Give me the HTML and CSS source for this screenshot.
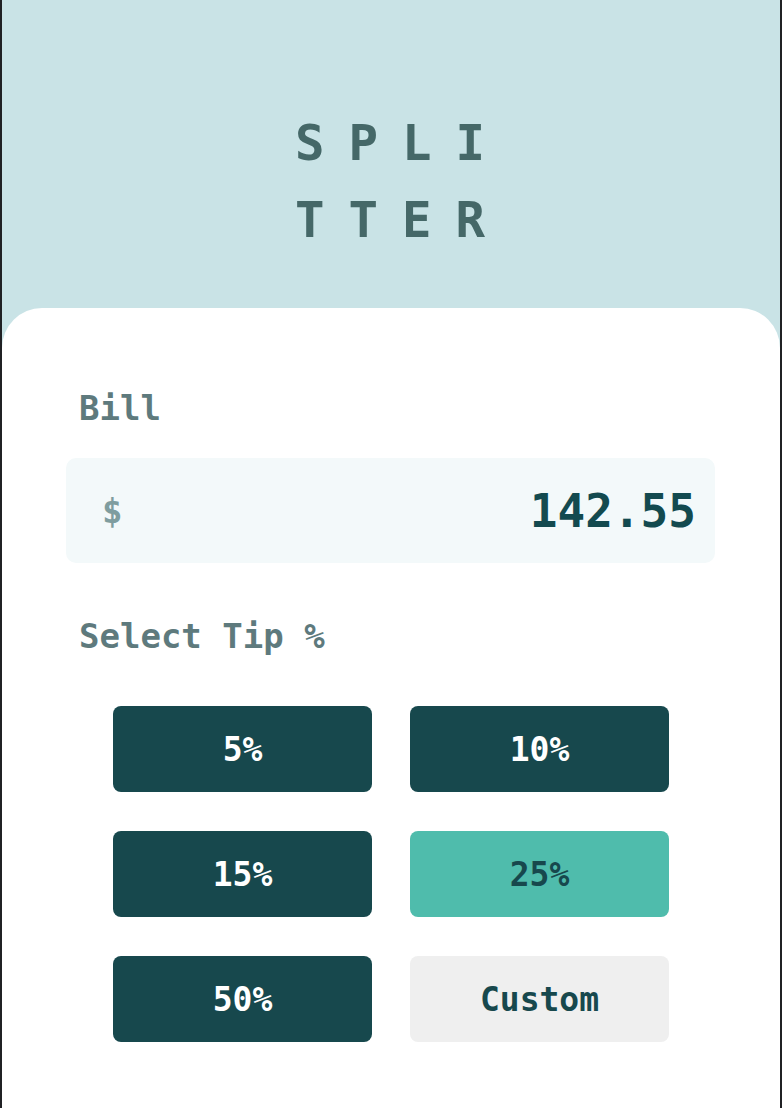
FILE: index.html
```html
<!DOCTYPE html>
<html lang="en">
<head>
<meta charset="utf-8">
<title>Splitter</title>
<link rel="stylesheet" href="styles.css">
</head>
<body>
<div class="frame">
  <header class="header">
    <h1 class="logo">SPLITTER</h1>
  </header>
  <main class="card">
    <label class="label" for="bill">Bill</label>
    <div class="bill">
      <span class="dollar">$</span>
      <span class="bill-value" id="bill">142.55</span>
    </div>
    <div class="label label-tip">Select Tip %</div>
    <div class="tips">
      <button class="tip">5%</button>
      <button class="tip">10%</button>
      <button class="tip">15%</button>
      <button class="tip tip-active">25%</button>
      <button class="tip">50%</button>
      <button class="tip tip-custom">Custom</button>
    </div>
  </main>
</div>
</body>
</html>
```

FILE: styles.css
```css
html, body {
  margin: 0;
  padding: 0;
  height: 100%;
  background: #202124;
}
body {
  font-family: "DejaVu Sans Mono", "Liberation Mono", monospace;
  font-weight: bold;
  overflow: hidden;
}
.frame {
  margin: 0 2px;
  min-height: 100%;
  background: #c9e3e6;
  display: flex;
  flex-direction: column;
}
.header {
  padding-top: 105px;
  padding-bottom: 49px;
  display: flex;
  justify-content: center;
}
.logo {
  margin: 0;
  width: 216px;
  padding-left: 24px;
  font-size: 49px;
  line-height: 77px;
  letter-spacing: 24px;
  color: #456868;
  word-break: break-all;
  font-weight: bold;
}
.card {
  flex: 1;
  background: #ffffff;
  border-radius: 40px 40px 0 0;
  padding: 80px 65px 60px 64px;
}
.label {
  display: block;
  font-size: 34px;
  line-height: 40px;
  color: #5e7a7d;
  padding-left: 13px;
}
.bill {
  margin-top: 30px;
  height: 105px;
  border-radius: 10px;
  background: #f3f9fa;
  display: flex;
  align-items: center;
  justify-content: space-between;
  padding: 0 19px 0 36px;
}
.dollar {
  font-size: 34px;
  color: #7f9d9f;
}
.bill-value {
  font-size: 46px;
  color: #134a4f;
}
.label-tip {
  margin-top: 53px;
}
.tips {
  margin-top: 50px;
  padding: 0 46px 0 47px;
  display: grid;
  grid-template-columns: 1fr 1fr;
  column-gap: 38px;
  row-gap: 39px;
}
.tip {
  height: 86px;
  border: none;
  border-radius: 8px;
  background: #17484d;
  color: #ffffff;
  font-family: "DejaVu Sans Mono", "Liberation Mono", monospace;
  font-weight: bold;
  font-size: 33px;
  padding: 0;
}
.tip-active {
  background: #4fbcac;
  color: #17484d;
}
.tip-custom {
  background: #efefef;
  color: #17484d;
}
```
